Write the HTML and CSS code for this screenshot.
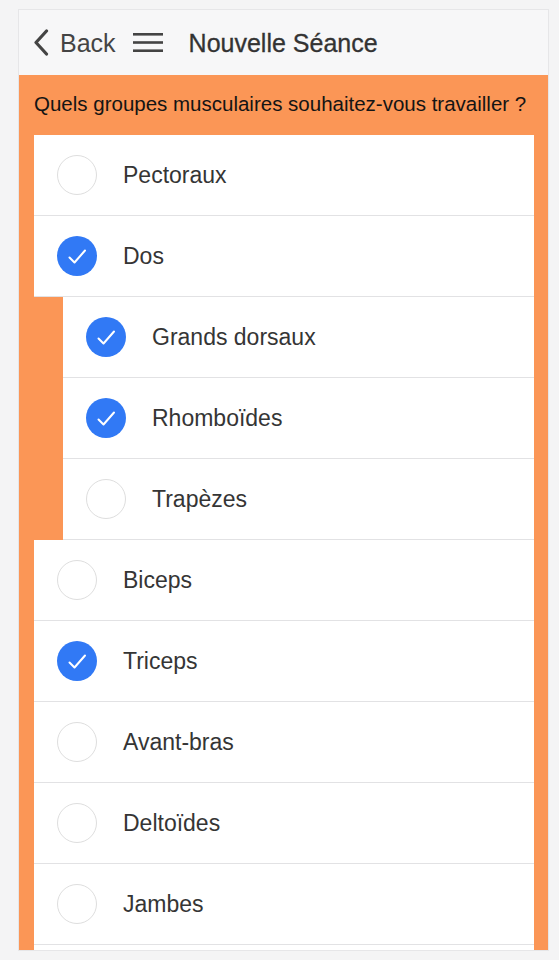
FILE: index.html
```html
<!DOCTYPE html>
<html lang="fr">
<head>
<meta charset="utf-8">
<title>Nouvelle Séance</title>
<link rel="stylesheet" href="styles.css">
</head>
<body>
<div class="frame">
  <header class="header">
    <div class="back">
      <svg class="chevron" width="16" height="27" viewBox="0 0 16 27"><path d="M13.5 2 L3 13.5 L13.5 25" fill="none" stroke="#444" stroke-width="3.2" stroke-linecap="round" stroke-linejoin="round"/></svg>
      <span class="back-label">Back</span>
    </div>
    <svg class="burger" width="30" height="20" viewBox="0 0 30 20"><rect x="0" y="0" width="30" height="2.6" fill="#444"/><rect x="0" y="8.2" width="30" height="2.6" fill="#444"/><rect x="0" y="16.4" width="30" height="2.6" fill="#444"/></svg>
    <h1 class="title">Nouvelle Séance</h1>
  </header>
  <main class="content">
    <p class="question">Quels groupes musculaires souhaitez-vous travailler ?</p>
    <ul class="list">
      <li class="row"><span class="radio"></span><span class="label">Pectoraux</span></li>
      <li class="row"><span class="radio checked"><svg viewBox="0 0 40 40"><path d="M12.5 21.5 L17.5 26.5 L28 14.5" fill="none" stroke="#fff" stroke-width="2" stroke-linecap="round" stroke-linejoin="round"/></svg></span><span class="label">Dos</span></li>
      <li class="sub">
        <ul class="sublist">
          <li class="row"><span class="radio checked"><svg viewBox="0 0 40 40"><path d="M12.5 21.5 L17.5 26.5 L28 14.5" fill="none" stroke="#fff" stroke-width="2" stroke-linecap="round" stroke-linejoin="round"/></svg></span><span class="label">Grands dorsaux</span></li>
          <li class="row"><span class="radio checked"><svg viewBox="0 0 40 40"><path d="M12.5 21.5 L17.5 26.5 L28 14.5" fill="none" stroke="#fff" stroke-width="2" stroke-linecap="round" stroke-linejoin="round"/></svg></span><span class="label">Rhomboïdes</span></li>
          <li class="row"><span class="radio"></span><span class="label">Trapèzes</span></li>
        </ul>
      </li>
      <li class="row"><span class="radio"></span><span class="label">Biceps</span></li>
      <li class="row"><span class="radio checked"><svg viewBox="0 0 40 40"><path d="M12.5 21.5 L17.5 26.5 L28 14.5" fill="none" stroke="#fff" stroke-width="2" stroke-linecap="round" stroke-linejoin="round"/></svg></span><span class="label">Triceps</span></li>
      <li class="row"><span class="radio"></span><span class="label">Avant-bras</span></li>
      <li class="row"><span class="radio"></span><span class="label">Deltoïdes</span></li>
      <li class="row"><span class="radio"></span><span class="label">Jambes</span></li>
      <li class="row"></li>
    </ul>
  </main>
</div>
</body>
</html>
```
FILE: styles.css
```css
html, body {
  margin: 0;
  padding: 0;
  background: #f4f4f5;
  font-family: "Liberation Sans", Arial, Helvetica, sans-serif;
}
body {
  height: 960px;
  overflow: hidden;
}
.frame {
  margin: 10px 11px 0 19px;
  height: 940px;
  overflow: hidden;
  box-shadow: 0 0 0 1px #e6e6e8;
  display: flex;
  flex-direction: column;
}
.header {
  height: 65px;
  flex: none;
  background: #f7f7f8;
  display: flex;
  align-items: center;
  padding-left: 14px;
  box-sizing: border-box;
}
.back {
  display: flex;
  align-items: center;
  gap: 11px;
}
.chevron { display: block; }
.back-label {
  font-size: 25px;
  color: #444;
  line-height: 30px;
}
.burger {
  display: block;
  margin-left: 17px;
}
.title {
  margin: 0 0 0 26px;
  font-size: 25px;
  font-weight: normal;
  color: #333;
  line-height: 30px;
  -webkit-text-stroke: 0.3px #333;
}
.content {
  flex: 1;
  background: #fb9656;
  padding: 17px 14px 0 15px;
}
.question {
  margin: 0 0 19px 0;
  font-size: 20.5px;
  line-height: 24px;
  color: #141414;
  white-space: nowrap;
}
.list, .sublist {
  list-style: none;
  margin: 0;
  padding: 0;
}
.sub {
  padding-left: 29px;
}
.row {
  height: 80px;
  background: #fff;
  border-bottom: 1px solid #e2e2e4;
  display: flex;
  align-items: center;
  padding-left: 23px;
}
.radio {
  width: 40px;
  height: 40px;
  box-sizing: border-box;
  border-radius: 50%;
  border: 1.5px solid #dedede;
  background: #fff;
  flex: none;
  display: flex;
}
.radio.checked {
  border: none;
  background: #3179f5;
}
.radio svg {
  width: 40px;
  height: 40px;
  display: block;
}
.label {
  margin-left: 26px;
  font-size: 23px;
  color: #353535;
}
```
